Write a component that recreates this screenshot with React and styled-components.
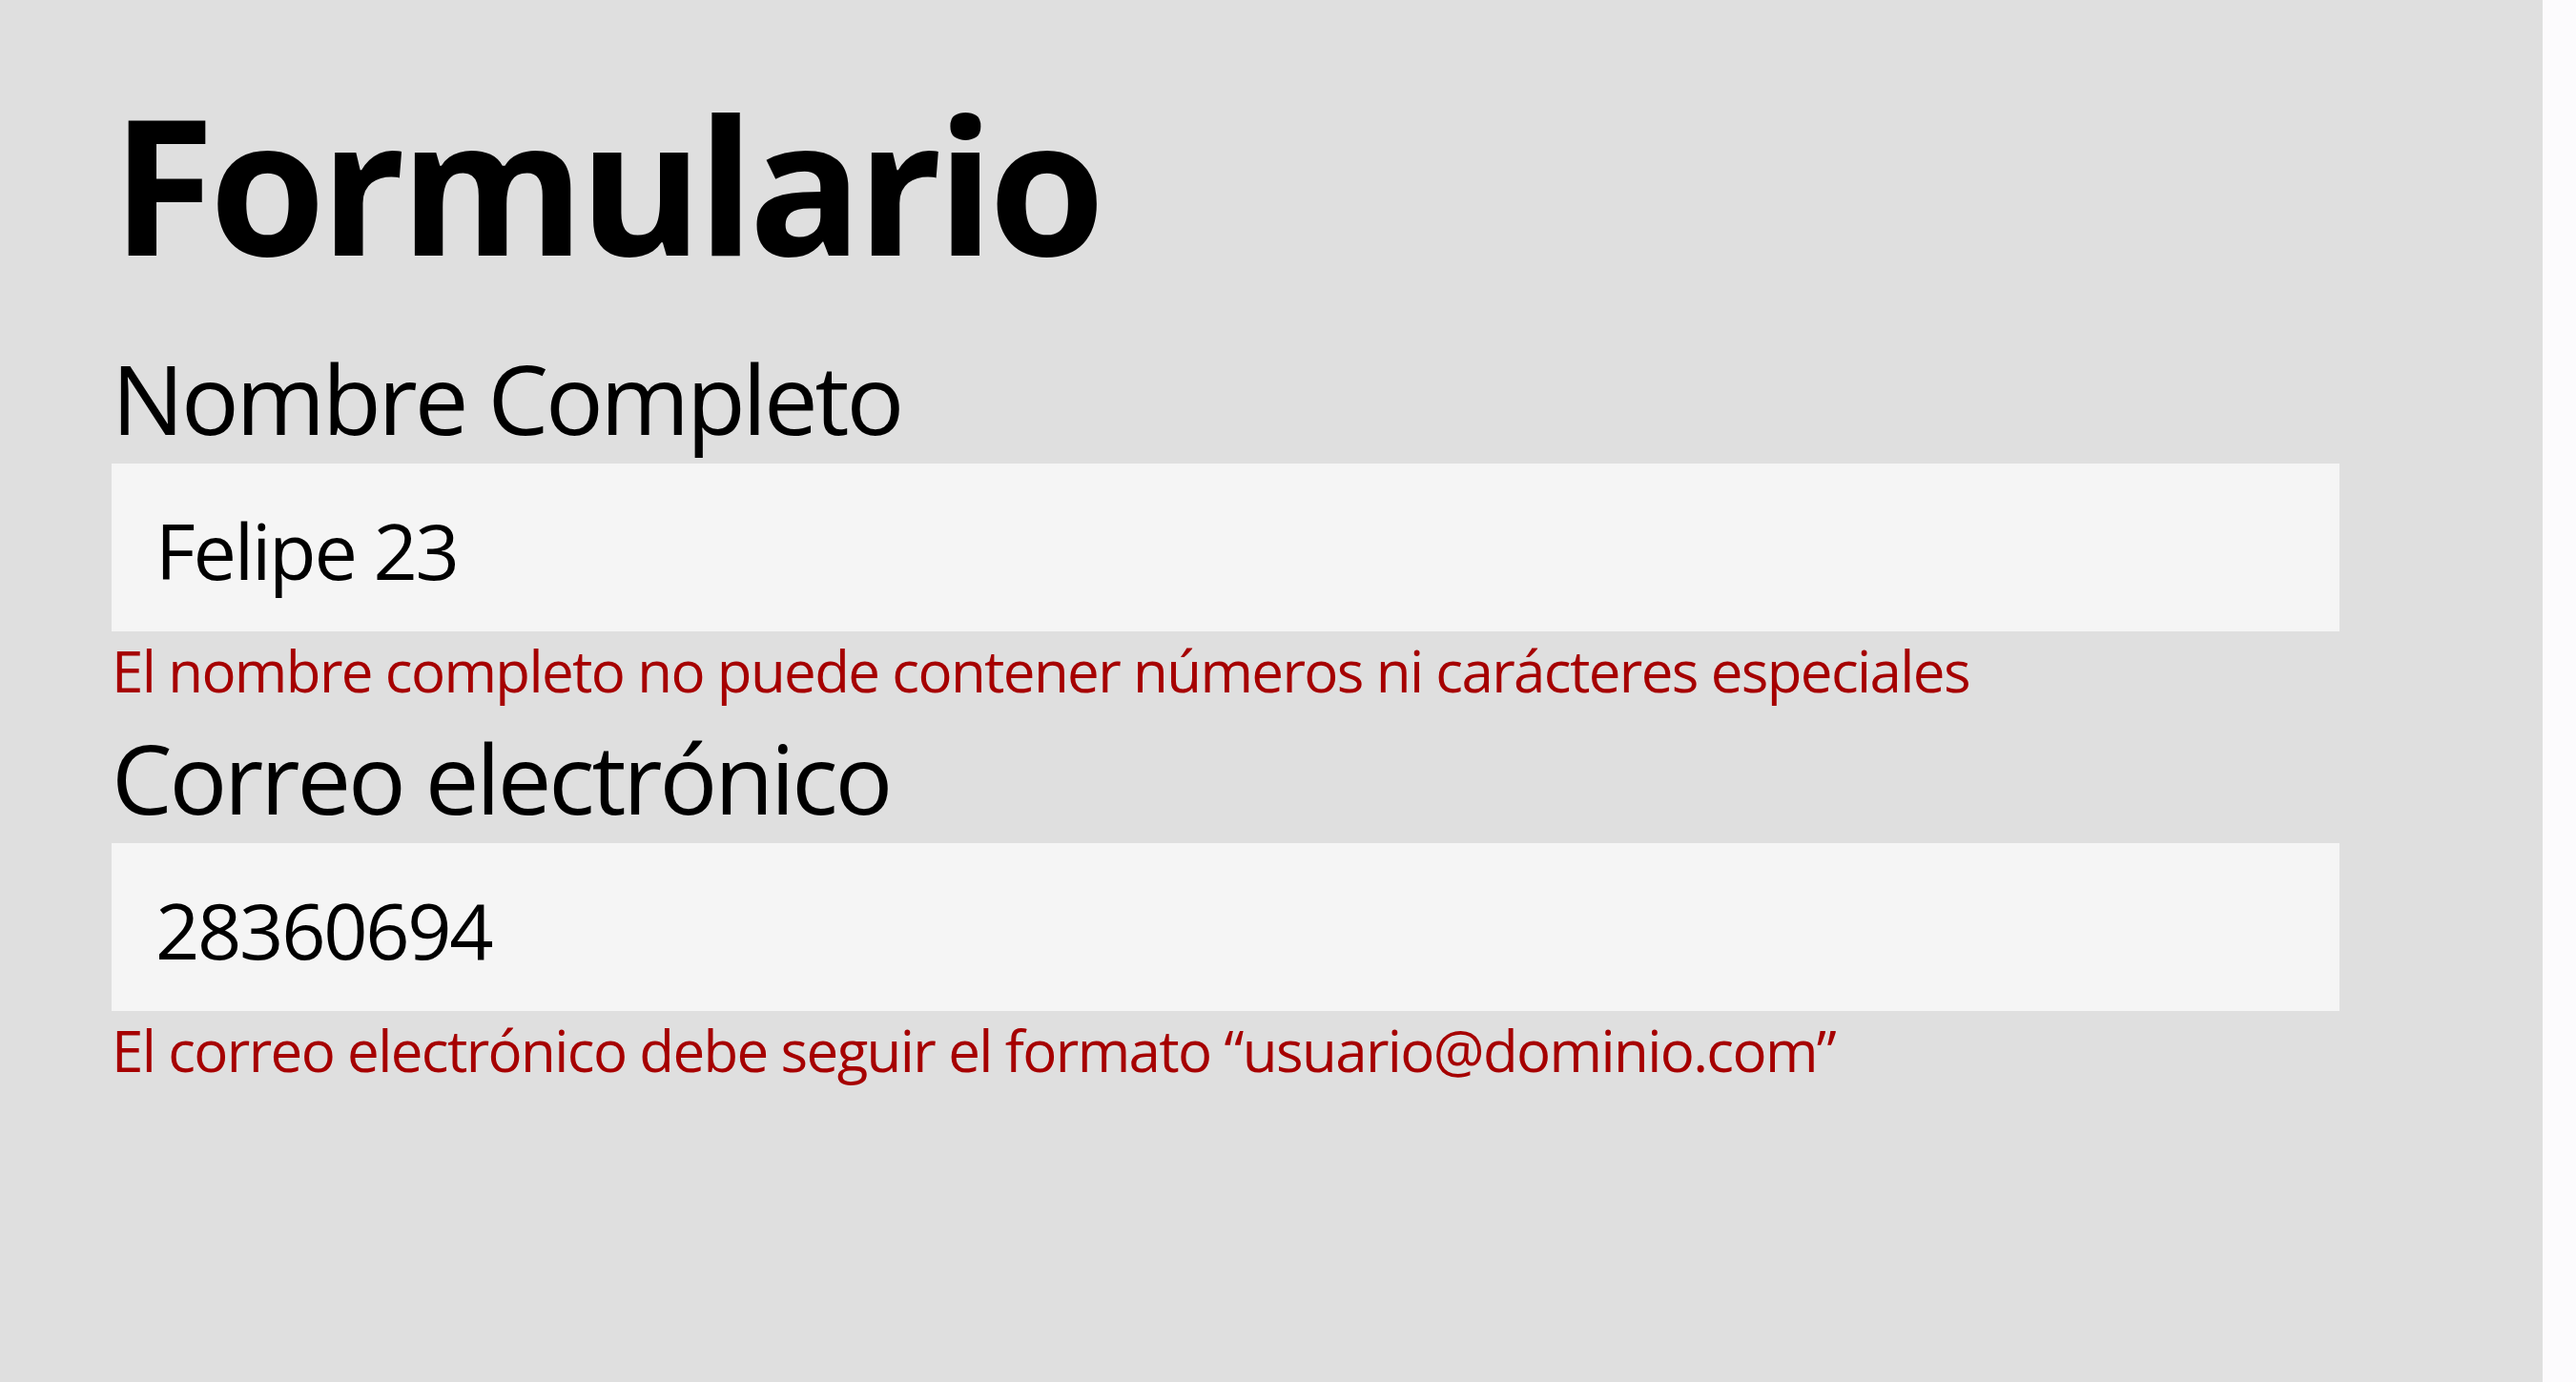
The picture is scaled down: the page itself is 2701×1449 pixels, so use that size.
import React from "react";
import styled, { createGlobalStyle } from "styled-components";

const GlobalStyle = createGlobalStyle`
  html, body {
    margin: 0;
    padding: 0;
    background: #fcfbfd;
  }
  * {
    box-sizing: border-box;
  }
`;

const Page = styled.main`
  width: calc(100vw - 35px);
  min-height: 100vh;
  background: #dfdfdf;
  padding: 93px 0 0 117px;
  font-family: "Open Sans", "Noto Sans", sans-serif;
  color: #000;
`;

const Title = styled.h1`
  margin: 0 0 77px;
  font-size: 197px;
  line-height: 1;
  font-weight: 700;
  letter-spacing: -0.029em;
`;

const Form = styled.form`
  display: flex;
  flex-direction: column;
  gap: 32px;
  width: 2336px;
`;

const Field = styled.div`
  display: flex;
  flex-direction: column;
`;

const Label = styled.label`
  font-size: 101px;
  line-height: 1;
  letter-spacing: -0.031em;
  margin-bottom: 18px;
`;

const Input = styled.input`
  width: 100%;
  height: 176px;
  padding: 50px 46px 45px;
  border: none;
  outline: none;
  background: #f5f5f5;
  font-family: inherit;
  font-size: 81px;
  line-height: 1;
  letter-spacing: -0.028em;
  color: #000;
`;

const ErrorText = styled.span`
  margin-top: 11px;
  font-size: 60px;
  line-height: 1;
  letter-spacing: -0.027em;
  color: #a60000;
`;

const fields = [
  {
    id: "nombre",
    label: "Nombre Completo",
    value: "Felipe 23",
    error: "El nombre completo no puede contener números ni carácteres especiales",
  },
  {
    id: "correo",
    label: "Correo electrónico",
    value: "28360694",
    error: "El correo electrónico debe seguir el formato “usuario@dominio.com”",
  },
];

const App = () => {
  return (
    <>
      <GlobalStyle />
      <Page>
        <Title>Formulario</Title>
        <Form onSubmit={(e) => e.preventDefault()}>
          {fields.map((f) => (
            <Field key={f.id}>
              <Label htmlFor={f.id}>{f.label}</Label>
              <Input id={f.id} defaultValue={f.value} />
              <ErrorText>{f.error}</ErrorText>
            </Field>
          ))}
        </Form>
      </Page>
    </>
  );
};

export default App;
